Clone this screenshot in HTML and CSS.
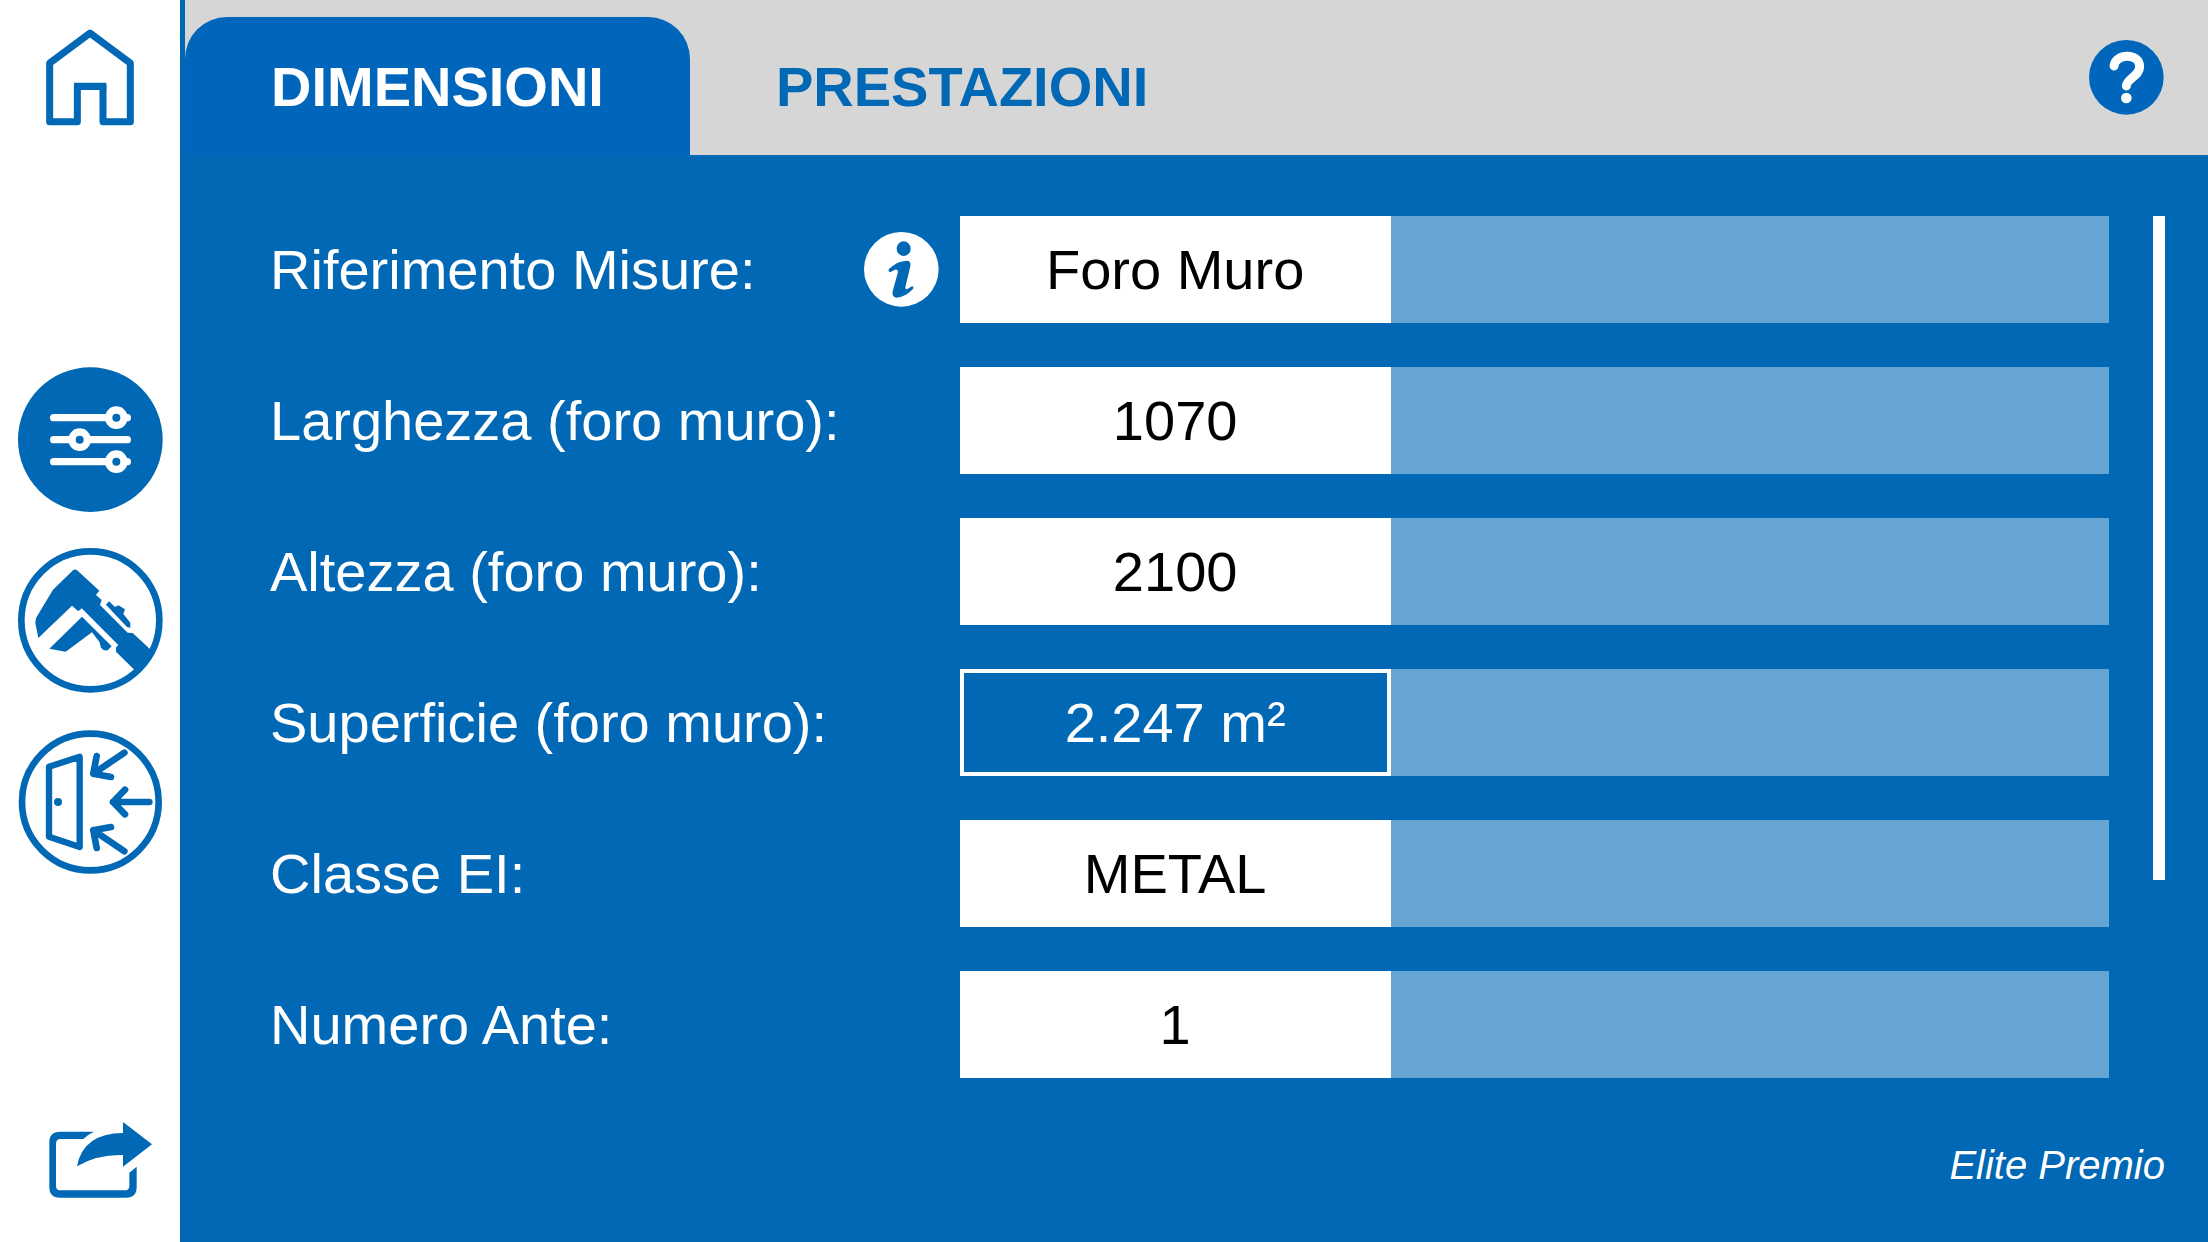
FILE: index.html
```html
<!DOCTYPE html>
<html lang="it">
<head>
    <meta charset="UTF-8">
    <meta name="viewport" content="width=device-width, initial-scale=1">
    <title>Dimensioni</title>
    <link rel="stylesheet" href="styles.css">
</head>
<body>
    <nav class="sidebar">
        <button class="side-btn" type="button" aria-label="Home">
            <svg class="icon-home" viewBox="0 88 540 290">
                <path d="M270 100 L391 190 V366 H309 V260 H232 V366 H149 V190 Z" fill="none" stroke="#0068b4" stroke-width="21" stroke-linejoin="round"/>
                <path d="M222 270 V249 H319 V270 Z" fill="#0068b4"/>
            </svg>
        </button>

        <div class="side-group">
            <button class="side-btn" type="button" aria-label="Parametri">
                <svg class="icon-round" viewBox="53 51 435 435">
                    <circle cx="270" cy="269" r="217" fill="#0068b4"/>
                    <g fill="#0068b4" stroke="#fff" stroke-width="22" stroke-linecap="round">
                        <path d="M160 203 H381 M160 269 H381 M160 335 H381"/>
                        <circle cx="348" cy="203" r="23"/>
                        <circle cx="238" cy="269" r="23"/>
                        <circle cx="348" cy="335" r="23"/>
                    </g>
                </svg>
            </button>
            <button class="side-btn" type="button" aria-label="Misure">
                <svg class="icon-round" viewBox="53 55 435 435">
                    <circle cx="270" cy="272" r="207" fill="none" stroke="#0068b4" stroke-width="20"/>
                    <g fill="#0068b4">
                        <path d="M218 122 Q225 117 232 123 L297 183 L287 196 L304 211 L299 226 L382 309 L397 310 L452 361 L430 398 L402 420 L347 366 V353 L246 239 L233 244 L215 228 L114 325 L105 280 L107 265 L158 180 Z"/>
                        <path d="M245 261 L334 350 L322 362 Q309 364 302 354 L297 336 L275 308 L196 366 L147 357 Z"/>
                        <path d="M326 215 L344 232 L354 227 L374 239 L369 253 L390 279 V294 L380 292 L317 225 Z"/>
                    </g>
                    <path d="M240 240 L350 350" stroke="#fff" stroke-width="11"/>
                </svg>
            </button>
            <button class="side-btn" type="button" aria-label="Porta">
                <svg class="icon-round" viewBox="53 57 435 435">
                    <circle cx="270" cy="276" r="205" fill="none" stroke="#0068b4" stroke-width="20"/>
                    <g fill="none" stroke="#0068b4" stroke-width="20" stroke-linejoin="round" stroke-linecap="round">
                        <path d="M146 170 L238 140 V411 L146 380 Z" stroke-width="19"/>
                        <path d="M372 128 L279 191 M289 138 L279 191 L332 201"/>
                        <path d="M447 276 H338 M374 239 L338 276 L374 313"/>
                        <path d="M372 424 L279 361 M289 414 L279 361 L332 351"/>
                    </g>
                    <circle cx="173" cy="276" r="12" fill="#0068b4"/>
                </svg>
            </button>
        </div>

        <button class="side-btn share" type="button" aria-label="Condividi">
            <svg class="icon-share" viewBox="0 95 540 228">
                <path d="M282 124 H180 Q148 124 148 156 V290 Q148 322 180 322 H378 Q410 322 410 290 V229 L388 247 V286 Q388 300 374 300 H182 Q168 300 168 286 V160 Q168 146 182 146 H250 Q264 132 282 124 Z" fill="#0068b4"/>
                <path d="M369 95 L456 162 L369 229 V194 Q290 192 231 228 Q249 129 369 128 Z" fill="#0068b4"/>
            </svg>
        </button>
    </nav>

    <main class="main">
        <header class="topbar">
            <button class="tab active" type="button">DIMENSIONI</button>
            <button class="tab" type="button">PRESTAZIONI</button>
            <button class="round-btn help" type="button" aria-label="Aiuto">
                <svg viewBox="0 0 225 225">
                    <circle cx="112" cy="112" r="112" fill="#0066bb"/>
                    <path d="M75 78 C79 39 152 38 152 80 C152 108 113 116 112 138" fill="none" stroke="#fff" stroke-width="27" stroke-linecap="round"/>
                    <circle cx="112" cy="174" r="16" fill="#fff"/>
                </svg>
            </button>
        </header>

        <section class="content">
            <form class="rows">
                <div class="row">
                    <div class="label">
                        <label for="riferimento">Riferimento Misure:</label>
                        <button class="round-btn" type="button" aria-label="Informazioni">
                            <svg viewBox="0 0 225 225">
                                <circle cx="112" cy="112" r="112" fill="#fff"/>
                                <ellipse cx="119" cy="50" rx="21" ry="22" fill="#0068b4"/>
                                <path d="M74 112 Q99 87 128 86 Q142 86 139 103 L124 165 Q123 173 130 171 L144 163 Q150 164 147 171 Q123 196 97 197 Q83 195 86 178 L102 120 Q102 110 93 113 L78 121 Q72 119 74 112 Z" fill="#0068b4"/>
                            </svg>
                        </button>
                    </div>
                    <div class="field">
                        <select class="value" id="riferimento">
                            <option>Foro Muro</option>
                        </select>
                    </div>
                </div>
                <div class="row">
                    <div class="label"><label for="larghezza">Larghezza (foro muro):</label></div>
                    <div class="field"><input class="value" type="text" id="larghezza" value="1070"></div>
                </div>
                <div class="row">
                    <div class="label"><label for="altezza">Altezza (foro muro):</label></div>
                    <div class="field"><input class="value" type="text" id="altezza" value="2100"></div>
                </div>
                <div class="row">
                    <div class="label"><label for="superficie">Superficie (foro muro):</label></div>
                    <div class="field"><input class="value computed" type="text" id="superficie" value="2.247 m²" readonly></div>
                </div>
                <div class="row">
                    <div class="label"><label for="classe">Classe EI:</label></div>
                    <div class="field">
                        <select class="value" id="classe">
                            <option>METAL</option>
                        </select>
                    </div>
                </div>
                <div class="row">
                    <div class="label"><label for="ante">Numero Ante:</label></div>
                    <div class="field"><input class="value" type="text" id="ante" value="1"></div>
                </div>
            </form>
            <div class="scrollbar"><div class="thumb"></div></div>
        </section>

        <footer class="footer">Elite Premio</footer>
    </main>
</body>
</html>
```

FILE: styles.css
```css
* {
    box-sizing: border-box;
    margin: 0;
    padding: 0;
}

body {
    display: flex;
    min-height: 100vh;
    background: #0068b4;
    color: #fff;
    font-family: "Liberation Sans", Arial, sans-serif;
    font-size: 56px;
}

button, input, select {
    font: inherit;
    color: inherit;
    border: none;
    border-radius: 0;
    background: none;
}

button {
    cursor: pointer;
}

svg {
    display: block;
}

/* sidebar */
.sidebar {
    flex: none;
    display: flex;
    flex-direction: column;
    width: 185px;
    padding: 29px 0 44px;
    background: #fff;
    border-right: 5px solid #0068b4;
}

.side-btn {
    display: flex;
    justify-content: center;
    width: 100%;
}

.side-group {
    display: flex;
    flex-direction: column;
    gap: 36px;
    margin-top: 241px;
}

.share {
    margin-top: auto;
}

.icon-home {
    width: 180px;
    height: 97px;
}

.icon-round {
    width: 145px;
    height: 145px;
}

.icon-share {
    width: 180px;
    height: 76px;
}

/* tabs */
.main {
    flex: 1;
    display: flex;
    flex-direction: column;
    min-width: 0;
}

.topbar {
    display: flex;
    align-items: stretch;
    height: 155px;
    padding: 17px 44px 0 0;
    background: #d6d6d6;
}

.tab {
    padding: 0 86px;
    color: #0068b4;
    font-weight: bold;
    border-radius: 42px 42px 0 0;
}

.tab.active {
    background: #0066bb;
    color: #fff;
}

.round-btn {
    flex: none;
    width: 75px;
    height: 75px;
}

.help {
    margin: 23px 0 0 auto;
}

/* form */
.content {
    display: flex;
    gap: 44px;
    padding: 61px 43px 0 85px;
}

.rows {
    flex: 1;
    display: flex;
    flex-direction: column;
    gap: 44px;
}

.row {
    display: grid;
    grid-template-columns: 3fr 5fr;
    height: 107px;
}

.label {
    display: flex;
    justify-content: space-between;
    align-items: center;
    padding-right: 21px;
    white-space: nowrap;
}

.field {
    display: flex;
    background: #66a4d1;
}

.value {
    width: 37.5%;
    background: #fff;
    color: #000;
    text-align: center;
    text-align-last: center;
    appearance: none;
}

.value.computed {
    background: #0068b4;
    color: #fff;
    border: 4px solid #fff;
}

.scrollbar {
    width: 12px;
}

.thumb {
    height: 77%;
    background: #fff;
}

.footer {
    margin-top: auto;
    padding: 0 43px 54px;
    font-size: 40px;
    font-style: italic;
    line-height: 46px;
    text-align: right;
}
```
